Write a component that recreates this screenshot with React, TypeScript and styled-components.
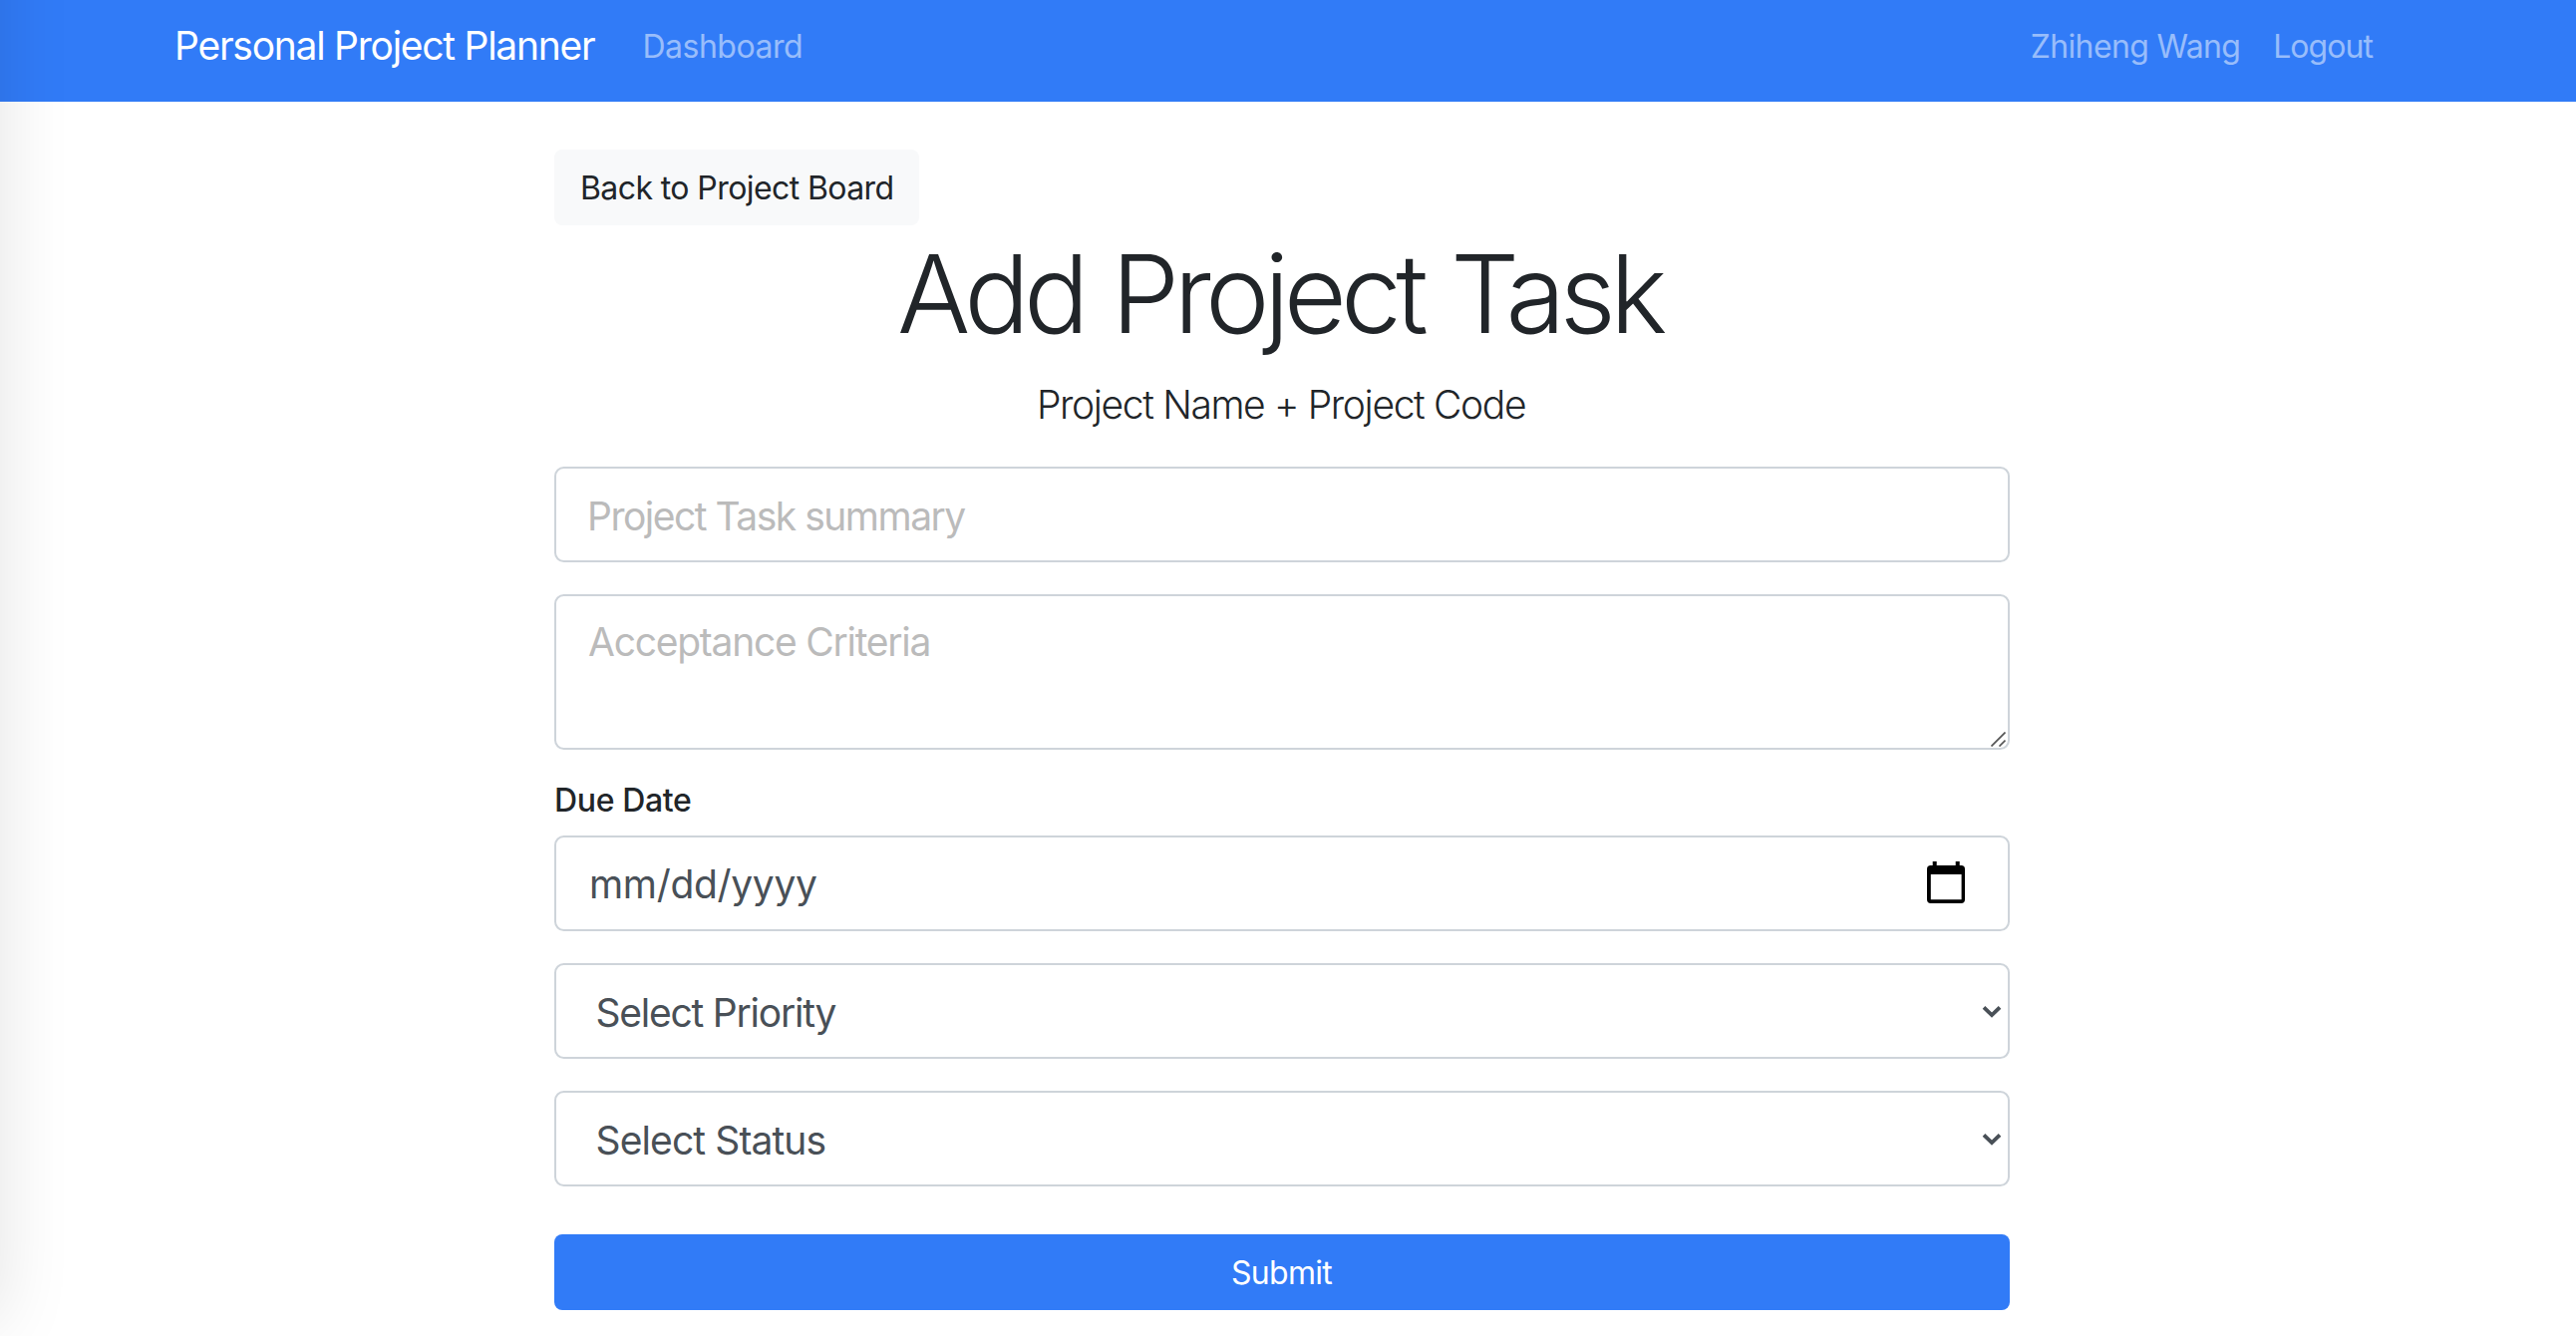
import React from "react";
import styled, { createGlobalStyle } from "styled-components";

const GlobalStyle = createGlobalStyle`
  *, *::before, *::after { box-sizing: border-box; }
  body {
    margin: 0;
    min-height: 1340px;
    overflow: hidden;
    background: #fff;
    color: #212529;
    font-family: Inter, "Liberation Sans", sans-serif;
    font-size: 32px;
    font-weight: 430;
    line-height: 48px;
  }
`;

const Navbar = styled.nav`
  display: flex;
  align-items: center;
  height: 102px;
  padding: 0 204px 10px 175px;
  background: #317bf7;
`;

const Brand = styled.a`
  margin-right: 48px;
  color: #fff;
  font-size: 39px;
  letter-spacing: -1.262px;
  white-space: nowrap;
`;

const NavLinks = styled.div<{ $end?: boolean }>`
  display: flex;
  gap: 33px;
  margin-left: ${(p) => (p.$end ? "auto" : "0")};
`;

const NavLink = styled.a<{ $tracking?: number }>`
  padding-top: 1px;
  color: rgba(255, 255, 255, 0.5);
  letter-spacing: ${(p) => p.$tracking ?? 0}px;
  white-space: nowrap;
`;

const Column = styled.main`
  display: flex;
  flex-direction: column;
  width: 1460px;
  margin: 48px 0 0 556px;
`;

const BackButton = styled.a`
  align-self: flex-start;
  width: 366px;
  height: 76px;
  padding: 15px 0 13px 26px;
  border-radius: 8px;
  background: #f8f9fa;
  letter-spacing: -0.59px;
  white-space: nowrap;
`;

const Title = styled.h1`
  margin: 0;
  padding-right: 5px;
  font-size: 109px;
  font-weight: 300;
  line-height: 136px;
  letter-spacing: -5.76px;
  word-spacing: 3px;
  text-align: center;
`;

const Lead = styled.p`
  margin: 14px 0 32px;
  padding-right: 2px;
  font-size: 39px;
  font-weight: 300;
  line-height: 60px;
  letter-spacing: -1.359px;
  text-align: center;
`;

const Form = styled.form`
  display: flex;
  flex-direction: column;
`;

const Field = styled.div`
  position: relative;
  display: flex;
  margin-bottom: 32px;
`;

const control = `
  display: block;
  width: 100%;
  margin: 0;
  border: 2px solid #ced4da;
  border-radius: 9.6px;
  outline: none;
  background: #fff;
  color: #495057;
  font-family: inherit;
  font-size: 39px;
  font-weight: inherit;
  line-height: 60px;
`;

const TextInput = styled.input<{ $tracking: number; $date?: boolean }>`
  ${control}
  height: 96px;
  padding: ${(p) => (p.$date ? "0 32px 0 33px" : "3px 32px 0 31px")};
  letter-spacing: ${(p) => p.$tracking}px;
  &::placeholder {
    color: ${(p) => (p.$date ? "#495057" : "#bbb")};
    opacity: 1;
  }
`;

const TextArea = styled.textarea`
  ${control}
  height: 156px;
  padding: 16px 32px;
  resize: none;
  letter-spacing: -1.252px;
  &::placeholder {
    color: #bbb;
    opacity: 1;
  }
`;

const Select = styled.select<{ $tracking: number }>`
  ${control}
  appearance: none;
  height: 96px;
  padding: 3px 60px 0 39.5px;
  letter-spacing: ${(p) => p.$tracking}px;
`;

const Adornment = styled.svg<{ $right: number; $top: number }>`
  position: absolute;
  right: ${(p) => p.$right}px;
  top: ${(p) => p.$top}px;
  pointer-events: none;
`;

const Label = styled.h6`
  margin: -5px 0 11px;
  font-size: 32px;
  font-weight: 500;
  line-height: 48px;
  letter-spacing: -0.357px;
`;

const Submit = styled.button`
  height: 76px;
  margin-top: 16px;
  padding: 1px 1px 0 0;
  border: 0;
  border-radius: 8px;
  background: #317bf7;
  color: #fff;
  font: inherit;
  letter-spacing: -0.725px;
`;

const EdgeShadow = styled.div`
  position: fixed;
  top: -200px;
  bottom: 15px;
  left: -200px;
  width: 200px;
  box-shadow: 0 0 72px rgba(0, 0, 0, 0.115);
  pointer-events: none;
`;

function ResizeGrip() {
  return (
    <Adornment $right={4} $top={138} width={15} height={15} viewBox="0 0 15 15">
      <path d="M0.5 14.5 14.5 0.5M8.5 14.5 14.5 8.5" stroke="#555" strokeWidth="1.7" fill="none" />
    </Adornment>
  );
}

function CalendarIcon() {
  return (
    <Adornment $right={45} $top={26} width={38} height={42} viewBox="0 0 38 42">
      <path
        fillRule="evenodd"
        d="M5.7 0h4v4h19V0h4v4h1.6A3.7 3.7 0 0 1 38 7.700v30.600a3.700 3.700 0 0 1-3.700 3.700H3.700A3.700 3.700 0 0 1 0 38.300V7.700A3.700 3.700 0 0 1 3.700 4h2zM3.800 13v25.200h30.800V13z"
        fill="#000"
      />
    </Adornment>
  );
}

function Chevron() {
  return (
    <Adornment $right={8} $top={42} width={20} height={14} viewBox="0 0 20 14">
      <path d="M2 2.300 10 10.200 18 2.300" stroke="#495057" strokeWidth="3.800" fill="none" />
    </Adornment>
  );
}

export default function App() {
  return (
    <>
      <GlobalStyle />
      <Navbar>
        <Brand>Personal Project Planner</Brand>
        <NavLinks>
          <NavLink $tracking={-0.49}>Dashboard</NavLink>
        </NavLinks>
        <NavLinks $end>
          <NavLink $tracking={-0.656}>Zhiheng Wang</NavLink>
          <NavLink $tracking={-0.955}>Logout</NavLink>
        </NavLinks>
      </Navbar>
      <Column>
        <BackButton>Back to Project Board</BackButton>
        <Title>Add Project Task</Title>
        <Lead>Project Name + Project Code</Lead>
        <Form>
          <Field>
            <TextInput $tracking={-1.5} placeholder="Project Task summary" />
          </Field>
          <Field>
            <TextArea placeholder="Acceptance Criteria" />
            <ResizeGrip />
          </Field>
          <Label>Due Date</Label>
          <Field>
            <TextInput $date $tracking={-0.328} placeholder="mm/dd/yyyy" />
            <CalendarIcon />
          </Field>
          <Field>
            <Select $tracking={-1.231}>
              <option>Select Priority</option>
            </Select>
            <Chevron />
          </Field>
          <Field>
            <Select $tracking={-0.887}>
              <option>Select Status</option>
            </Select>
            <Chevron />
          </Field>
          <Submit type="button">Submit</Submit>
        </Form>
      </Column>
      <EdgeShadow />
    </>
  );
}
